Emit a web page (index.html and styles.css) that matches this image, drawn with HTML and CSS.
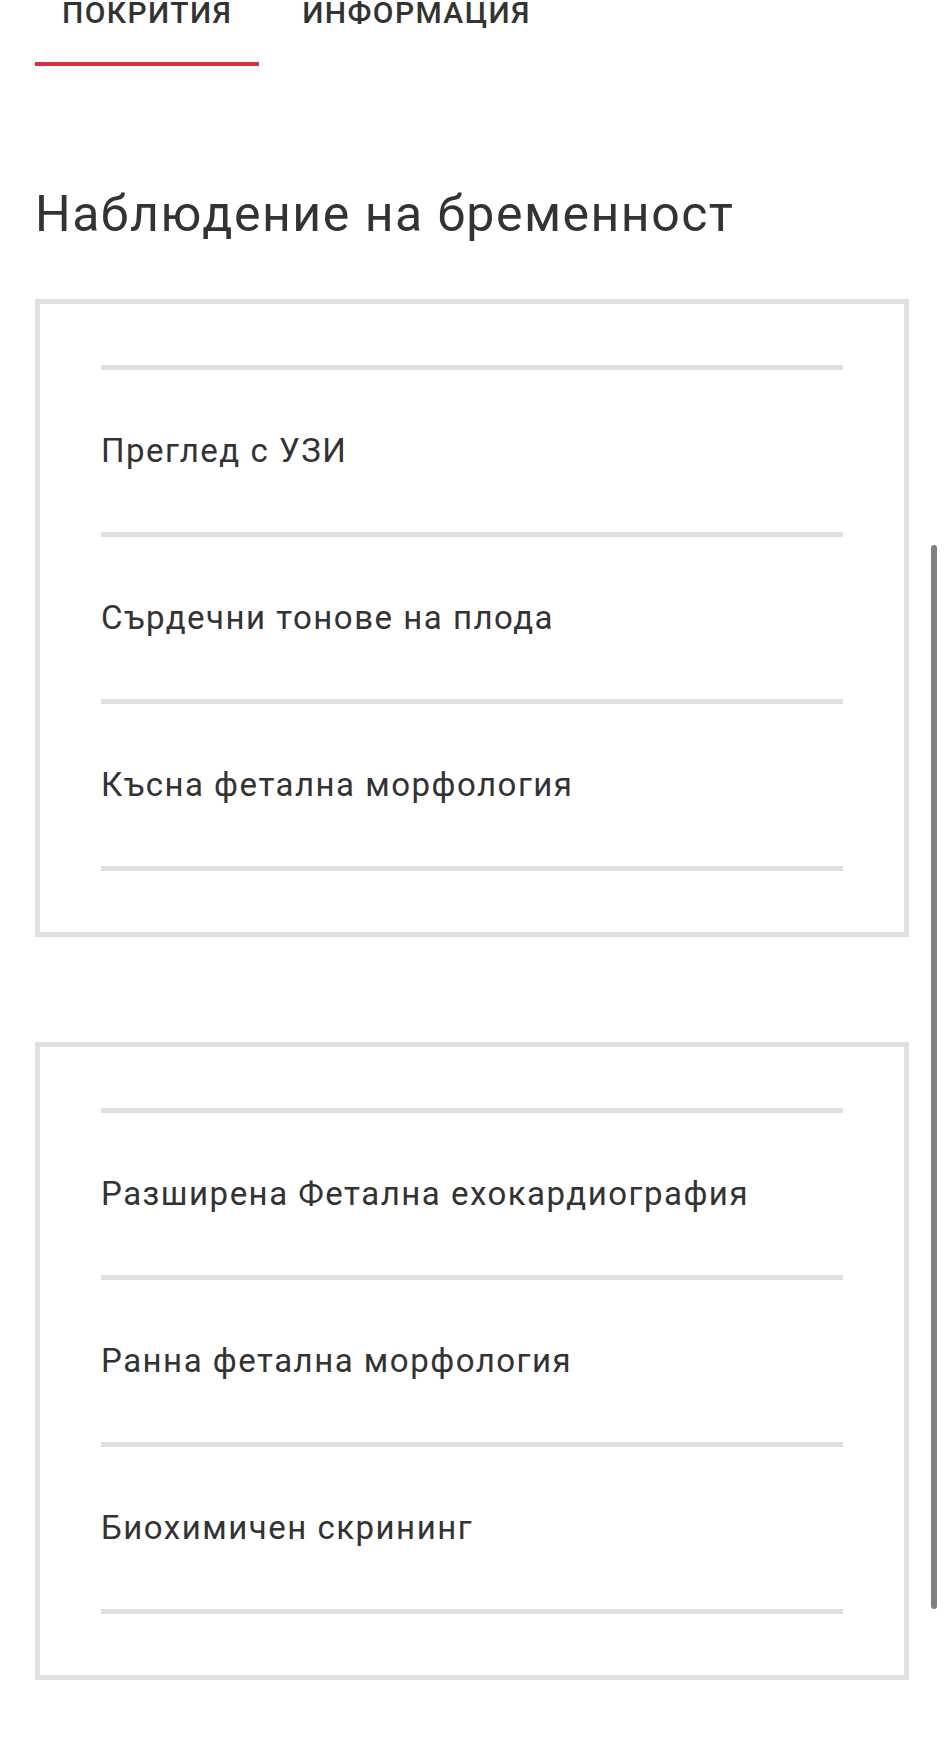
FILE: index.html
```html
<!DOCTYPE html>
<html lang="bg">
<head>
<meta charset="utf-8">
<title>Наблюдение на бременност</title>
<link rel="stylesheet" href="styles.css">
</head>
<body>
<div class="page">
  <nav class="tabs">
    <a class="tab tab-active">ПОКРИТИЯ</a>
    <a class="tab">ИНФОРМАЦИЯ</a>
  </nav>

  <h1 class="title">Наблюдение на бременност</h1>

  <section class="card">
    <ul class="list">
      <li class="item">Преглед с УЗИ</li>
      <li class="item">Сърдечни тонове на плода</li>
      <li class="item">Късна фетална морфология</li>
    </ul>
  </section>

  <section class="card">
    <ul class="list">
      <li class="item">Разширена Фетална ехокардиография</li>
      <li class="item">Ранна фетална морфология</li>
      <li class="item">Биохимичен скрининг</li>
    </ul>
  </section>
</div>
<div class="scrollbar"></div>
</body>
</html>
```

FILE: styles.css
```css
html, body {
  margin: 0;
  padding: 0;
  background: #ffffff;
}

body {
  font-family: Roboto, "Noto Sans", "Liberation Sans", sans-serif;
  color: #333333;
  position: relative;
  min-height: 1746px;
}

.page {
  padding: 0 35px;
  display: flex;
  flex-direction: column;
}

.tabs {
  display: flex;
  gap: 16px;
}

.tab {
  font-size: 30px;
  font-weight: 500;
  line-height: 26px;
  letter-spacing: 1.4px;
  padding: 0 27px 36px 27px;
  border-bottom: 4px solid transparent;
  color: #333333;
}

.tab-active {
  border-bottom-color: #d7303f;
}

.title {
  margin: 118px 0 55px 0;
  font-size: 50px;
  font-weight: 400;
  line-height: 60px;
  letter-spacing: 1.5px;
  color: #333333;
}

.card {
  border: 5px solid #e0e0e0;
  padding: 61px;
  margin-bottom: 105px;
}

.list {
  list-style: none;
  margin: 0;
  padding: 0;
  border-bottom: 5px solid #e0e0e0;
}

.item {
  border-top: 5px solid #e0e0e0;
  padding: 61px 0;
  font-size: 33px;
  line-height: 40px;
  letter-spacing: 1.5px;
  color: #333333;
}

.scrollbar {
  position: absolute;
  left: 931px;
  top: 545px;
  width: 6px;
  height: 1064px;
  border-radius: 3px;
  background: #808080;
}
```
